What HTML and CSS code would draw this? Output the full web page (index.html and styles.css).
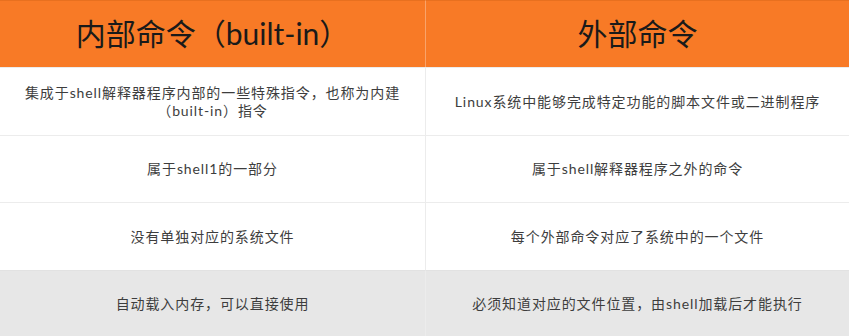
FILE: index.html
```html
<!DOCTYPE html>
<html lang="zh-CN">
<head>
<meta charset="utf-8">
<title>内部命令与外部命令</title>
<link rel="stylesheet" href="styles.css">
</head>
<body>
<div class="table">
  <div class="cell head">内部命令（built-in）</div>
  <div class="cell head">外部命令</div>

  <div class="cell">集成于shell解释器程序内部的一些特殊指令，也称为内建<br>（built-in）指令</div>
  <div class="cell">Linux系统中能够完成特定功能的脚本文件或二进制程序</div>

  <div class="cell">属于shell1的一部分</div>
  <div class="cell">属于shell解释器程序之外的命令</div>

  <div class="cell">没有单独对应的系统文件</div>
  <div class="cell">每个外部命令对应了系统中的一个文件</div>

  <div class="cell alt">自动载入内存，可以直接使用</div>
  <div class="cell alt">必须知道对应的文件位置，由shell加载后才能执行</div>
</div>
</body>
</html>
```
FILE: styles.css
```css
html, body {
  margin: 0;
  padding: 0;
  background: #ffffff;
}

.table {
  display: grid;
  grid-template-columns: 425px 424px;
  grid-template-rows: 67px 68px 67px 68px 66px;
  width: 849px;
  height: 336px;
  font-family: "Lato", "Noto Sans CJK SC", sans-serif;
}

.cell {
  display: flex;
  align-items: center;
  justify-content: center;
  text-align: center;
  font-size: 14px;
  line-height: 18px;
  letter-spacing: 0.9px;
  color: #3d3d3d;
  padding: 0 10px;
  box-sizing: border-box;
  border-top: 1px solid #ececec;
  border-left: 1px solid #ececec;
}

.cell:nth-child(odd) {
  border-left: none;
}

.head {
  background: #f87a26;
  color: #1a1a1a;
  font-size: 30px;
  line-height: 36px;
  letter-spacing: 0;
  padding-bottom: 3px;
  border-top: 1px solid #e8701f;
  border-left-color: #f9a36a;
}

.alt {
  background: #e7e7e7;
  border-top-color: #e2e2e2;
}
```
